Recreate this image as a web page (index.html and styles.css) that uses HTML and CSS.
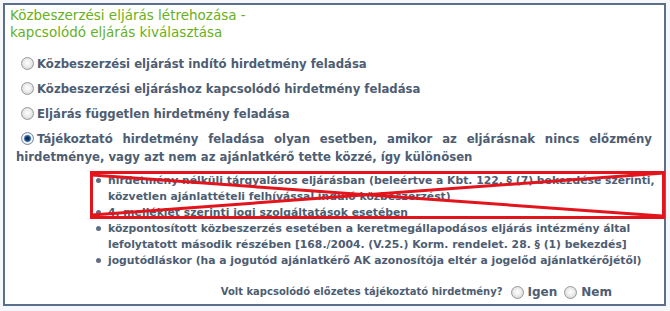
FILE: index.html
```html
<!DOCTYPE html>
<html lang="hu">
<head>
<meta charset="utf-8">
<link rel="stylesheet" href="styles.css">
</head>
<body>
<div class="panel">
  <h1 class="title">Közbeszerzési eljárás létrehozása -<br>kapcsolódó eljárás kiválasztása</h1>
  <div class="options">
    <div class="opt"><span class="radio"></span>Közbeszerzési eljárást indító hirdetmény feladása</div>
    <div class="opt"><span class="radio"></span>Közbeszerzési eljáráshoz kapcsolódó hirdetmény feladása</div>
    <div class="opt"><span class="radio"></span>Eljárás független hirdetmény feladása</div>
    <div class="opt"><span class="radio checked"></span>Tájékoztató hirdetmény feladása olyan esetben, amikor az eljárásnak nincs előzmény hirdetménye, vagy azt nem az ajánlatkérő tette közzé, így különösen</div>
  </div>
  <ul class="bullets">
    <li><span>hirdetmény nélküli tárgyalásos eljárásban (beleértve a Kbt. 122. § (7) bekezdése szerinti,<br>közvetlen ajánlattételi felhívással induló közbeszerzést)</span></li>
    <li><span>4. melléklet szerinti jogi szolgáltatások esetében</span></li>
    <li><span>központosított közbeszerzés esetében a keretmegállapodásos eljárás intézmény által<br>lefolytatott második részében [168./2004. (V.25.) Korm. rendelet. 28. § (1) bekezdés]</span></li>
    <li><span>jogutódláskor (ha a jogutód ajánlatkérő AK azonosítója eltér a jogelőd ajánlatkérőjétől)</span></li>
  </ul>
  <div class="question">
    <span class="qtext">Volt kapcsolódó előzetes tájékoztató hirdetmény?</span>
    <span class="radio"></span><span class="ans">Igen</span>
    <span class="radio"></span><span class="ans">Nem</span>
  </div>
  <svg class="strike" width="580" height="52" viewBox="0 0 580 52">
    <rect x="1.5" y="1.5" width="572" height="45" fill="none" stroke="#e3141c" stroke-width="3"/>
    <path d="M2 4 L572 45" fill="none" stroke="#e3141c" stroke-width="3"/>
    <path d="M2 44 L574 2" fill="none" stroke="#e3141c" stroke-width="3"/>
  </svg>
</div>
</body>
</html>
```
FILE: styles.css
```css
html, body {
  margin: 0;
  padding: 0;
}
body {
  background: #f5f7fa;
  font-family: "DejaVu Sans", Verdana, sans-serif;
  color: #4e5d72;
}
.panel {
  position: relative;
  margin: 3px;
  width: 659px;
  height: 299px;
  border: 2px solid #5b6f8b;
  background: #ffffff;
}
.title {
  margin: 0;
  padding: 2px 0 0 5px;
  font-size: 13.5px;
  line-height: 17px;
  font-weight: normal;
  color: #68b020;
}
.options {
  display: flex;
  flex-direction: column;
  gap: 7px;
  margin-top: 14px;
  padding: 0 12px 0 11px;
}
.opt {
  font-size: 11.7px;
  font-weight: bold;
  line-height: 18px;
  text-align: justify;
}
.radio {
  display: inline-block;
  vertical-align: -2px;
  box-sizing: border-box;
  width: 13px;
  height: 13px;
  margin: 0 3px 0 5px;
  border-radius: 50%;
  border: 1px solid #9a9a9a;
  background: radial-gradient(circle at 50% 45%, #ffffff 0, #ececec 45%, #c9c9c9 100%);
}
.radio.checked {
  border-color: #7a8a9a;
  background: radial-gradient(circle at 50% 50%, #16243a 0, #1f3c66 2px, #4a86cc 3.2px, #ffffff 4.2px, #e4e4e4 70%, #c9c9c9 100%);
}
.bullets {
  list-style: none;
  margin: 7px 0 0 91px;
  padding: 0;
  font-size: 10.8px;
  font-weight: bold;
  line-height: 16px;
}
.bullets li {
  display: flex;
  align-items: flex-start;
  white-space: nowrap;
}
.bullets li::before {
  content: "";
  flex: none;
  width: 5px;
  height: 5px;
  margin: 5px 7px 0 0;
  border-radius: 50%;
  background: #5f6e82;
}
.question {
  display: flex;
  justify-content: flex-end;
  align-items: center;
  margin-top: 15px;
  padding-right: 50px;
  font-weight: bold;
  line-height: 16px;
}
.qtext {
  font-size: 10px;
  margin-right: 3px;
}
.question .radio {
  margin: 0 4px 0 5px;
}
.ans {
  font-size: 12px;
  margin-right: 2px;
}
.strike {
  position: absolute;
  left: 85px;
  top: 166px;
}
```
